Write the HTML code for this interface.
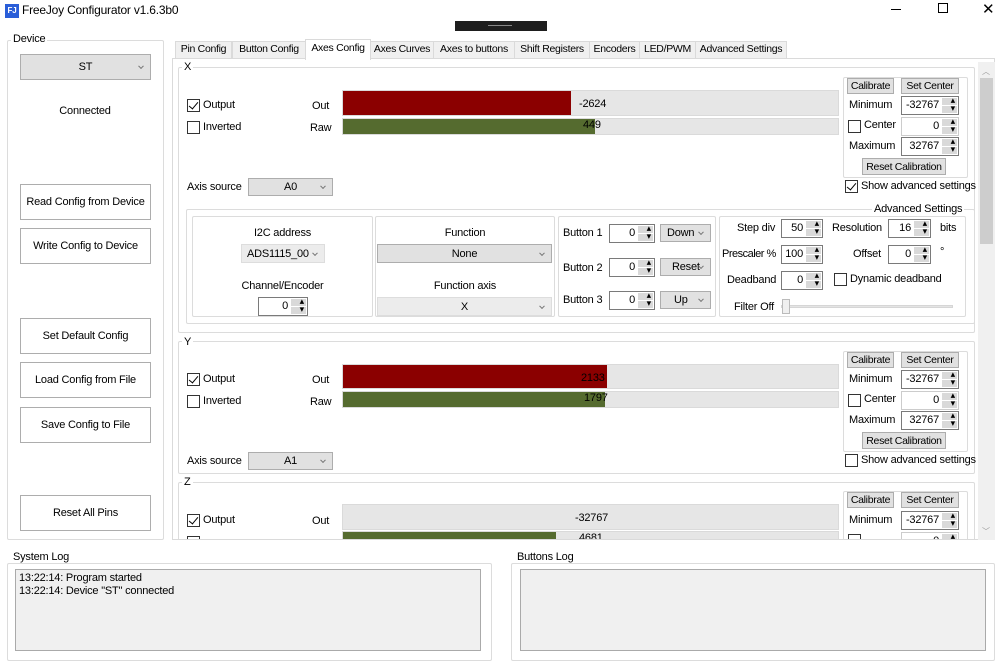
<!DOCTYPE html>
<html><head><meta charset="utf-8"><style>
*{box-sizing:border-box;margin:0;padding:0}
body{width:1000px;height:664px;background:#fff;font-family:"Liberation Sans",sans-serif;font-size:11px;letter-spacing:-0.2px;color:#000;position:relative;overflow:hidden}
.a{position:absolute;white-space:nowrap}
.g{position:absolute;border:1px solid #dcdcdc;border-radius:2px}
.gl{position:absolute;background:#fff;padding:0 2px;white-space:nowrap}
.btn{position:absolute;border:1px solid #adadad;background:#fff;display:flex;align-items:center;justify-content:center;white-space:nowrap;overflow:hidden}
.btn.gr{background:#e1e1e1;font-size:10.5px;letter-spacing:-0.3px}
.cb{position:absolute;width:13px;height:13px;border:1px solid #333;background:#fff}
.cb.on::after{content:"";position:absolute;left:3px;top:0px;width:4px;height:8px;border:solid #000;border-width:0 1.5px 1.5px 0;transform:rotate(40deg)}
.cmb{position:absolute;border:1px solid #adadad;background:#e1e1e1;display:flex;align-items:center;justify-content:center;white-space:nowrap}
.cmb::after{content:"";position:absolute;right:7px;top:50%;width:3px;height:3px;border:solid #777;border-width:0 1px 1px 0;transform:translateY(-70%) rotate(45deg)}
.cmb.dis{background:#ececec;border-color:#ddd}
.num{position:absolute;border:1px solid #7a7a7a;background:#fff;text-align:right;padding-right:19px;line-height:16px}
.num::after{content:"";position:absolute;right:1px;top:1px;bottom:1px;width:15px;background:linear-gradient(#d9d9d9 0 47%,#fff 47% 53%,#d9d9d9 53%)}
.num::before{content:"▴\A▾";white-space:pre;position:absolute;right:3px;top:-1px;font-size:9px;line-height:8px;z-index:1;color:#000}
.num.dis{border-color:#ccc}
.bar{position:absolute;background:#e6e6e6;border:1px solid #dadada}
.fill{position:absolute;left:0;top:0;bottom:0}
.r{background:#8b0000}.gn{background:#556b2f}
.tabs{position:absolute;left:175px;top:41px;height:18px}
.tabs div{position:absolute;top:0;height:18px;border:1px solid #dadada;background:#f0f0f0;text-align:center;line-height:15px;font-size:10.5px;letter-spacing:-0.3px;white-space:nowrap;overflow:hidden}
</style></head><body>
<div class="a" style="left:5px;top:4px;width:14px;height:14px;background:#2a5ed8;color:#fff;font-size:8px;font-weight:bold;text-align:center;line-height:14px">FJ</div>
<div class="a" style="left:22px;top:3px;font-size:12px">FreeJoy Configurator v1.6.3b0</div>
<div class="a" style="left:891px;top:9px;width:10px;height:1px;background:#000"></div>
<div class="a" style="left:938px;top:3px;width:10px;height:10px;border:1px solid #000"></div>
<div class="a" style="left:982px;top:0px;font-size:15px">✕</div>
<div class="a" style="left:455px;top:21px;width:92px;height:10px;background:#1e1e1e"></div>
<div class="a" style="left:488px;top:25px;width:24px;height:1px;background:#888"></div>

<div class="g" style="left:7px;top:40px;width:157px;height:500px"></div>
<div class="gl" style="left:11px;top:33px">Device</div>
<div class="cmb" style="left:20px;top:54px;width:131px;height:26px">ST</div>
<div class="a" style="left:0;width:170px;text-align:center;top:105px">Connected</div>
<div class="btn" style="left:20px;top:184px;width:131px;height:36px">Read Config from Device</div>
<div class="btn" style="left:20px;top:228px;width:131px;height:36px">Write Config to Device</div>
<div class="btn" style="left:20px;top:318px;width:131px;height:36px">Set Default Config</div>
<div class="btn" style="left:20px;top:362px;width:131px;height:36px">Load Config from File</div>
<div class="btn" style="left:20px;top:407px;width:131px;height:36px">Save Config to File</div>
<div class="btn" style="left:20px;top:495px;width:131px;height:36px">Reset All Pins</div>

<div class="a" style="left:172px;top:58px;width:823px;height:482px;border:1px solid #dadada;background:#fff"></div>
<div class="tabs">
<div style="left:0;width:57px">Pin Config</div>
<div style="left:57px;width:74px">Button Config</div>
<div style="left:130px;top:-2px;width:66px;height:21px;background:#fff;border-bottom:0;line-height:17px">Axes Config</div>
<div style="left:195px;width:64px">Axes Curves</div>
<div style="left:258px;width:82px">Axes to buttons</div>
<div style="left:339px;width:76px">Shift Registers</div>
<div style="left:414px;width:51px">Encoders</div>
<div style="left:464px;width:57px">LED/PWM</div>
<div style="left:520px;width:92px">Advanced Settings</div>
</div>
<div class="a" style="left:978px;top:62px;width:17px;height:478px;background:#f0f0f0"></div>
<div class="a" style="left:980px;top:78px;width:13px;height:166px;background:#cdcdcd"></div>
<div class="a" style="left:982px;top:66px;font-size:8px;color:#999">︿</div>
<div class="a" style="left:982px;top:526px;font-size:8px;color:#999">﹀</div>

<!-- X -->
<div class="g" style="left:178px;top:67px;width:797px;height:266px"></div>
<div class="gl" style="left:182px;top:61px">X</div>
<div class="cb on" style="left:187px;top:99px"></div><div class="a" style="left:203px;top:99px">Output</div>
<div class="cb" style="left:187px;top:121px"></div><div class="a" style="left:203px;top:121px">Inverted</div>
<div class="a" style="left:312px;top:100px">Out</div><div class="a" style="left:310px;top:122px">Raw</div>
<div class="bar" style="left:342px;top:90px;width:497px;height:26px"><div class="fill r" style="width:228px"></div><div class="a" style="left:236px;top:7px">-2624</div></div>
<div class="bar" style="left:342px;top:118px;width:497px;height:17px"><div class="fill gn" style="width:252px"></div><div class="a" style="left:240px;top:0px">449</div></div>
<div class="g" style="left:843px;top:77px;width:125px;height:101px"></div>
<div class="btn gr" style="left:847px;top:78px;width:47px;height:16px">Calibrate</div>
<div class="btn gr" style="left:901px;top:78px;width:58px;height:16px">Set Center</div>
<div class="a" style="left:849px;top:99px">Minimum</div><div class="num" style="left:901px;top:96px;width:58px;height:19px">-32767</div>
<div class="cb" style="left:848px;top:120px"></div><div class="a" style="left:864px;top:119px">Center</div><div class="num dis" style="left:901px;top:117px;width:58px;height:19px">0</div>
<div class="a" style="left:849px;top:140px">Maximum</div><div class="num" style="left:901px;top:137px;width:58px;height:19px">32767</div>
<div class="btn gr" style="left:862px;top:158px;width:84px;height:17px">Reset Calibration</div>
<div class="cb on" style="left:845px;top:180px"></div><div class="a" style="left:861px;top:180px">Show advanced settings</div>
<div class="a" style="left:187px;top:181px">Axis source</div>
<div class="cmb" style="left:248px;top:178px;width:85px;height:18px">A0</div>

<div class="g" style="left:186px;top:209px;width:789px;height:115px"></div>
<div class="gl" style="left:872px;top:203px">Advanced Settings</div>
<div class="g" style="left:192px;top:216px;width:181px;height:101px"></div>
<div class="g" style="left:375px;top:216px;width:180px;height:101px"></div>
<div class="g" style="left:558px;top:216px;width:158px;height:101px"></div>
<div class="g" style="left:719px;top:216px;width:247px;height:101px"></div>
<div class="a" style="left:192px;width:181px;text-align:center;top:227px">I2C address</div>
<div class="cmb dis" style="left:241px;top:244px;width:84px;height:19px;justify-content:flex-start;padding-left:5px">ADS1115_00</div>
<div class="a" style="left:192px;width:181px;text-align:center;top:280px">Channel/Encoder</div>
<div class="num" style="left:258px;top:297px;width:50px;height:19px">0</div>
<div class="a" style="left:375px;width:180px;text-align:center;top:227px">Function</div>
<div class="cmb" style="left:377px;top:244px;width:175px;height:19px">None</div>
<div class="a" style="left:375px;width:180px;text-align:center;top:280px">Function axis</div>
<div class="cmb dis" style="left:377px;top:297px;width:175px;height:19px">X</div>
<div class="a" style="left:563px;top:227px">Button 1</div><div class="num" style="left:609px;top:224px;width:46px;height:19px">0</div><div class="cmb" style="left:660px;top:224px;width:51px;height:18px;justify-content:flex-start;padding-left:6px">Down</div>
<div class="a" style="left:563px;top:262px">Button 2</div><div class="num" style="left:609px;top:258px;width:46px;height:19px">0</div><div class="cmb" style="left:660px;top:258px;width:51px;height:18px;justify-content:flex-start;padding-left:11px">Reset</div>
<div class="a" style="left:563px;top:294px">Button 3</div><div class="num" style="left:609px;top:291px;width:46px;height:19px">0</div><div class="cmb" style="left:660px;top:291px;width:51px;height:18px;justify-content:flex-start;padding-left:13px">Up</div>
<div class="a" style="left:737px;top:222px">Step div</div><div class="num" style="left:781px;top:219px;width:42px;height:19px">50</div>
<div class="a" style="left:832px;top:222px">Resolution</div><div class="num" style="left:888px;top:219px;width:43px;height:19px">16</div><div class="a" style="left:940px;top:222px">bits</div>
<div class="a" style="left:722px;top:248px;letter-spacing:-0.5px">Prescaler %</div><div class="num" style="left:781px;top:245px;width:42px;height:19px">100</div>
<div class="a" style="left:853px;top:248px">Offset</div><div class="num" style="left:888px;top:245px;width:43px;height:19px">0</div><div class="a" style="left:940px;top:246px">°</div>
<div class="a" style="left:727px;top:274px">Deadband</div><div class="num" style="left:781px;top:271px;width:42px;height:19px">0</div>
<div class="cb" style="left:834px;top:273px"></div><div class="a" style="left:850px;top:273px">Dynamic deadband</div>
<div class="a" style="left:734px;top:301px">Filter Off</div>
<div class="a" style="left:781px;top:305px;width:172px;height:3px;background:#e4e4e4;border:1px solid #d6d6d6"></div>
<div class="a" style="left:782px;top:299px;width:8px;height:15px;background:#f0f0f0;border:1px solid #bbb"></div>

<!-- Y -->
<div class="g" style="left:178px;top:341px;width:797px;height:133px"></div>
<div class="gl" style="left:182px;top:336px">Y</div>
<div class="cb on" style="left:187px;top:373px"></div><div class="a" style="left:203px;top:373px">Output</div>
<div class="cb" style="left:187px;top:395px"></div><div class="a" style="left:203px;top:395px">Inverted</div>
<div class="a" style="left:312px;top:374px">Out</div><div class="a" style="left:310px;top:396px">Raw</div>
<div class="bar" style="left:342px;top:364px;width:497px;height:25px"><div class="fill r" style="width:264px"></div><div class="a" style="left:238px;top:7px">2133</div></div>
<div class="bar" style="left:342px;top:391px;width:497px;height:17px"><div class="fill gn" style="width:262px"></div><div class="a" style="left:241px;top:0px">1797</div></div>
<div class="g" style="left:843px;top:351px;width:125px;height:101px"></div>
<div class="btn gr" style="left:847px;top:352px;width:47px;height:16px">Calibrate</div>
<div class="btn gr" style="left:901px;top:352px;width:58px;height:16px">Set Center</div>
<div class="a" style="left:849px;top:373px">Minimum</div><div class="num" style="left:901px;top:370px;width:58px;height:19px">-32767</div>
<div class="cb" style="left:848px;top:394px"></div><div class="a" style="left:864px;top:393px">Center</div><div class="num dis" style="left:901px;top:391px;width:58px;height:19px">0</div>
<div class="a" style="left:849px;top:414px">Maximum</div><div class="num" style="left:901px;top:411px;width:58px;height:19px">32767</div>
<div class="btn gr" style="left:862px;top:432px;width:84px;height:17px">Reset Calibration</div>
<div class="cb" style="left:845px;top:454px"></div><div class="a" style="left:861px;top:454px">Show advanced settings</div>
<div class="a" style="left:187px;top:455px">Axis source</div>
<div class="cmb" style="left:248px;top:452px;width:85px;height:18px">A1</div>

<!-- Z -->
<div class="a" style="left:172px;top:476px;width:806px;height:63px;overflow:hidden">
<div class="g" style="left:6px;top:6px;width:797px;height:133px"></div>
<div class="gl" style="left:10px;top:0px">Z</div>
<div class="cb on" style="left:15px;top:38px"></div><div class="a" style="left:31px;top:38px">Output</div>
<div class="cb" style="left:15px;top:60px"></div>
<div class="a" style="left:140px;top:39px">Out</div>
<div class="bar" style="left:170px;top:28px;width:497px;height:26px"><div class="a" style="left:232px;top:7px">-32767</div></div>
<div class="bar" style="left:170px;top:55px;width:497px;height:17px"><div class="fill gn" style="width:213px"></div><div class="a" style="left:236px;top:0px">4681</div></div>
<div class="g" style="left:671px;top:15px;width:125px;height:101px"></div>
<div class="btn gr" style="left:675px;top:16px;width:47px;height:16px">Calibrate</div>
<div class="btn gr" style="left:729px;top:16px;width:58px;height:16px">Set Center</div>
<div class="a" style="left:677px;top:38px">Minimum</div><div class="num" style="left:729px;top:35px;width:58px;height:19px">-32767</div>
<div class="cb" style="left:676px;top:58px"></div><div class="num dis" style="left:729px;top:56px;width:58px;height:19px">0</div>
</div>

<div class="g" style="left:7px;top:563px;width:485px;height:98px"></div>
<div class="gl" style="left:11px;top:551px">System Log</div>
<div class="a" style="left:15px;top:569px;width:466px;height:82px;background:#f0f0f0;border:1px solid #aaa;padding:2px 3px;line-height:13px">13:22:14: Program started<br>13:22:14: Device "ST" connected</div>
<div class="g" style="left:511px;top:563px;width:484px;height:98px"></div>
<div class="gl" style="left:515px;top:551px">Buttons Log</div>
<div class="a" style="left:520px;top:569px;width:466px;height:82px;background:#f0f0f0;border:1px solid #aaa"></div>
</body></html>
